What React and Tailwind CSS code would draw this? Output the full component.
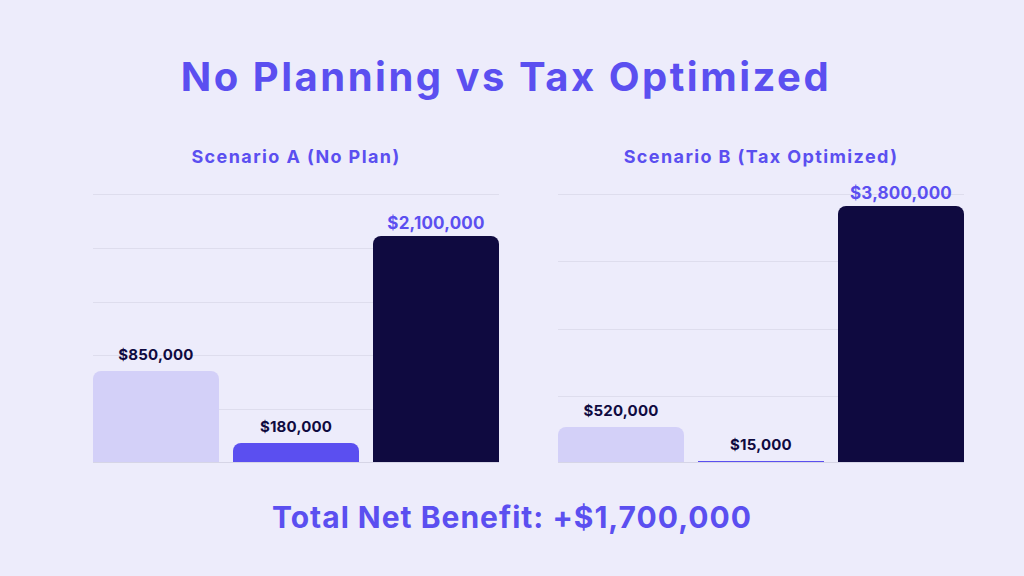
import React from 'react';

const scenarios = [
    {
        title: 'Scenario A (No Plan)',
        max: 2500000,
        gridSteps: 5,
        bars: [
            { value: 850000, label: '$850,000', tone: 'light' },
            { value: 180000, label: '$180,000', tone: 'mid' },
            { value: 2100000, label: '$2,100,000', tone: 'dark' },
        ],
    },
    {
        title: 'Scenario B (Tax Optimized)',
        max: 4000000,
        gridSteps: 4,
        bars: [
            { value: 520000, label: '$520,000', tone: 'light' },
            { value: 15000, label: '$15,000', tone: 'mid' },
            { value: 3800000, label: '$3,800,000', tone: 'dark' },
        ],
    },
];

const barColor = {
    light: 'bg-[#d3d0f8] rounded-t-[8px]',
    mid: 'bg-[#5b4ff0] rounded-t-[8px]',
    dark: 'bg-[#0f0a40] rounded-t-[8px]',
};

const PLOT_H = 269;

const Chart = ({ scenario }) => {
    const lines = Array.from({ length: scenario.gridSteps }, (_, i) => i);

    return (
        <div className="flex flex-col">
            <h2 className="text-center text-[18px] font-bold text-[#5b4ff0] leading-[24px] tracking-[1.4px]">
                {scenario.title}
            </h2>
            <div className="relative mt-[25px] border-b border-[#d6d5e6]" style={{ height: PLOT_H }}>
                {lines.map((i) => (
                    <div
                        key={i}
                        className="absolute left-0 right-0 h-px bg-[#dedded]"
                        style={{ top: (PLOT_H / scenario.gridSteps) * i }}
                    />
                ))}
                <div className="relative flex items-end gap-[14px] h-full">
                    {scenario.bars.map((bar) => {
                        const h = Math.max(1, Math.round((bar.value / scenario.max) * PLOT_H));
                        const isDark = bar.tone === 'dark';
                        return (
                            <div key={bar.label} className="flex-1 flex flex-col items-center justify-end">
                                <span
                                    className={
                                        isDark
                                            ? 'text-[17px] font-bold text-[#5b4ff0] leading-[20px] mb-[3px] tracking-[0.2px]'
                                            : 'text-[15px] font-bold text-[#0f0a40] leading-[20px] mb-[6px] tracking-[0.2px]'
                                    }
                                >
                                    {bar.label}
                                </span>
                                <div
                                    className={`w-full ${bar.value < 50000 ? 'bg-[#5b4ff0]' : barColor[bar.tone]}`}
                                    style={{ height: h }}
                                />
                            </div>
                        );
                    })}
                </div>
            </div>
        </div>
    );
};

export default function App() {
    return (
        <div
            className="w-[1024px] h-[576px] bg-[#edecfb] flex flex-col overflow-hidden"
            style={{ fontFamily: 'Inter, "Noto Sans", sans-serif' }}
        >
            <h1 className="mt-[52px] text-center text-[40px] font-bold text-[#5b4ff0] leading-[50px] tracking-[2.5px] pr-[12px]">
                No Planning vs Tax Optimized
            </h1>
            <div className="mt-[43px] grid grid-cols-2 gap-[59px] pl-[93px] pr-[60px]">
                {scenarios.map((s) => (
                    <Chart key={s.title} scenario={s} />
                ))}
            </div>
            <p className="mt-[36px] text-center text-[30px] font-bold text-[#5b4ff0] leading-[36px] tracking-[1px]">
                Total Net Benefit: +$1,700,000
            </p>
        </div>
    );
}
